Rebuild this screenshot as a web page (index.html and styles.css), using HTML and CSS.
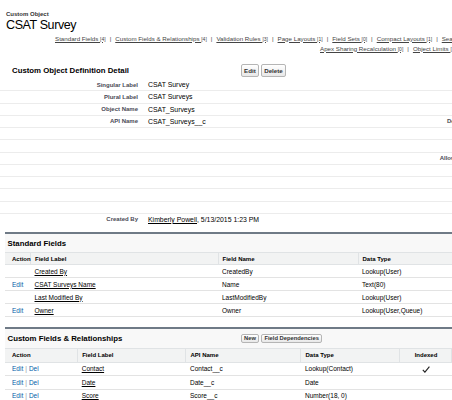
FILE: index.html
```html
<!DOCTYPE html>
<html lang="en">
<head>
    <meta charset="UTF-8">
    <title>CSAT Survey ~ Custom Object</title>
    <link rel="stylesheet" href="styles.css">
</head>
<body>
<div class="page">

    <div class="pt-header">
        <div class="pt-type">Custom Object</div>
        <h1 class="pt-title">CSAT Survey</h1>
    </div>

    <div class="quick-links">
        <div class="ql-row ql-first">
            <a href="#">Standard Fields <span class="count">[4]</span></a><span class="sep">|</span><a href="#">Custom Fields &amp; Relationships <span class="count">[4]</span></a><span class="sep">|</span><a href="#">Validation Rules <span class="count">[3]</span></a><span class="sep">|</span><a href="#">Page Layouts <span class="count">[1]</span></a><span class="sep">|</span><a href="#">Field Sets <span class="count">[0]</span></a><span class="sep">|</span><a href="#">Compact Layouts <span class="count">[1]</span></a><span class="sep">|</span><a href="#">Search Layouts <span class="count">[6]</span></a>
        </div>
        <div class="ql-row ql-second">
            <a href="#">Apex Sharing Recalculation <span class="count">[0]</span></a><span class="sep">|</span><a href="#">Object Limits <span class="count">[12]</span></a>
        </div>
    </div>

    <div class="detail-block">
        <div class="block-head">
            <h2 class="block-title">Custom Object Definition Detail</h2>
            <button class="btn btn-big">Edit</button>
            <button class="btn btn-big">Delete</button>
        </div>
        <table class="detail-list">
            <colgroup>
                <col class="c-label"><col class="c-data"><col class="c-label2"><col>
            </colgroup>
            <tr><td class="label-col">Singular Label</td><td class="data-col">CSAT Survey</td><td class="label-col"></td><td class="data-col"></td></tr>
            <tr><td class="label-col">Plural Label</td><td class="data-col">CSAT Surveys</td><td class="label-col"></td><td class="data-col"></td></tr>
            <tr><td class="label-col">Object Name</td><td class="data-col">CSAT_Surveys</td><td class="label-col"></td><td class="data-col"></td></tr>
            <tr><td class="label-col">API Name</td><td class="data-col">CSAT_Surveys__c</td><td class="label-col">Description</td><td class="data-col"></td></tr>
            <tr><td class="label-col"></td><td class="data-col"></td><td class="label-col"></td><td class="data-col"></td></tr>
            <tr><td class="label-col"></td><td class="data-col"></td><td class="label-col"></td><td class="data-col"></td></tr>
            <tr><td class="label-col"></td><td class="data-col"></td><td class="label-col">Allow Reports</td><td class="data-col"></td></tr>
            <tr><td class="label-col"></td><td class="data-col"></td><td class="label-col"></td><td class="data-col"></td></tr>
            <tr><td class="label-col"></td><td class="data-col"></td><td class="label-col"></td><td class="data-col"></td></tr>
            <tr><td class="label-col"></td><td class="data-col"></td><td class="label-col"></td><td class="data-col"></td></tr>
            <tr><td class="label-col"></td><td class="data-col"></td><td class="label-col"></td><td class="data-col"></td></tr>
            <tr class="last"><td class="label-col">Created By</td><td class="data-col"><a href="#" class="user-link">Kimberly Powell</a>, 5/13/2015 1:23 PM</td><td class="label-col"></td><td class="data-col"></td></tr>
        </table>
    </div>

    <div class="rel-list">
        <div class="rel-head">
            <h3 class="rel-title">Standard Fields</h3>
        </div>
        <table class="list std-list">
            <colgroup>
                <col class="s-action"><col class="s-label"><col class="s-name"><col class="s-type"><col>
            </colgroup>
            <tr><th class="first">Action</th><th>Field Label</th><th>Field Name</th><th>Data Type</th><th></th></tr>
            <tr><td class="first"></td><td><a href="#" class="field-link">Created By</a></td><td>CreatedBy</td><td>Lookup(User)</td><td></td></tr>
            <tr><td class="first"><a href="#" class="action-link">Edit</a></td><td><a href="#" class="field-link">CSAT Surveys Name</a></td><td>Name</td><td>Text(80)</td><td></td></tr>
            <tr><td class="first"></td><td><a href="#" class="field-link">Last Modified By</a></td><td>LastModifiedBy</td><td>Lookup(User)</td><td></td></tr>
            <tr><td class="first"><a href="#" class="action-link">Edit</a></td><td><a href="#" class="field-link">Owner</a></td><td>Owner</td><td>Lookup(User,Queue)</td><td></td></tr>
        </table>
    </div>

    <div class="rel-list custom">
        <div class="rel-head">
            <h3 class="rel-title">Custom Fields &amp; Relationships</h3>
            <button class="btn btn-small">New</button>
            <button class="btn btn-small">Field Dependencies</button>
        </div>
        <table class="list cust-list">
            <colgroup>
                <col class="k-action"><col class="k-label"><col class="k-api"><col class="k-type"><col class="k-index"><col>
            </colgroup>
            <tr><th class="first">Action</th><th>Field Label</th><th>API Name</th><th>Data Type</th><th class="center">Indexed</th><th>Controlling Field</th></tr>
            <tr>
                <td class="first"><a href="#" class="action-link">Edit</a><span class="pipe">|</span><a href="#" class="action-link">Del</a></td>
                <td><a href="#" class="field-link">Contact</a></td><td>Contact__c</td><td>Lookup(Contact)</td>
                <td class="center"><svg class="check" width="8" height="7" viewBox="0 0 8 7"><path d="M0.8 3.9 L2.9 6.2 L7.4 0.6" fill="none" stroke="#222" stroke-width="1.1"/></svg></td><td></td>
            </tr>
            <tr>
                <td class="first"><a href="#" class="action-link">Edit</a><span class="pipe">|</span><a href="#" class="action-link">Del</a></td>
                <td><a href="#" class="field-link">Date</a></td><td>Date__c</td><td>Date</td><td></td><td></td>
            </tr>
            <tr>
                <td class="first"><a href="#" class="action-link">Edit</a><span class="pipe">|</span><a href="#" class="action-link">Del</a></td>
                <td><a href="#" class="field-link">Score</a></td><td>Score__c</td><td>Number(18, 0)</td><td></td><td></td>
            </tr>
        </table>
    </div>

</div>
</body>
</html>
```

FILE: styles.css
```css
html, body {
    margin: 0;
    background: #fff;
    overflow: hidden;
}
body {
    font-family: "Liberation Sans", Arial, sans-serif;
    color: #222;
}
.page {
    width: 600px;
}

/* page title */
.pt-header {
    padding: 11px 0 0 6px;
}
.pt-type {
    font-size: 6px;
    font-weight: bold;
    line-height: 7px;
    color: #333;
}
.pt-title {
    margin: 0;
    font-size: 12.5px;
    font-weight: normal;
    line-height: 15px;
    letter-spacing: -0.4px;
    color: #000;
}

/* links under the title */
.quick-links {
    padding-top: 0.5px;
    font-size: 6.2px;
    line-height: 9px;
    white-space: nowrap;
    color: #444;
}
.ql-first {
    padding-left: 55px;
}
.ql-second {
    padding-left: 320px;
}
.quick-links a {
    color: #444;
    text-decoration: underline;
}
.quick-links .count {
    font-size: 5px;
}
.quick-links .sep {
    margin: 0 4px;
}

/* object detail */
.detail-block {
    margin-top: 7.5px;
}
.block-head {
    display: flex;
    align-items: center;
    height: 18px;
}
.block-title {
    box-sizing: border-box;
    width: 241px;
    margin: 0;
    padding-left: 12px;
    font-size: 7.8px;
    font-weight: bold;
    color: #000;
}
.btn {
    box-sizing: border-box;
    margin: 0 2.5px 0 0;
    padding: 0 2px;
    font-family: "Liberation Sans", Arial, sans-serif;
    font-weight: bold;
    color: #333;
    background: linear-gradient(#fff, #e8e8e8);
    border: 1px solid #b5b5b5;
    border-radius: 2px;
}
.btn-big {
    height: 13px;
    font-size: 6.2px;
}
.btn-small {
    height: 9px;
    font-size: 5.8px;
    line-height: 7px;
}

.detail-list {
    width: 600px;
    table-layout: fixed;
    border-collapse: collapse;
}
.c-label { width: 142px; }
.c-data { width: 250px; }
.c-label2 { width: 92px; }
.detail-list td {
    height: 11.25px;
    padding: 0;
    border-bottom: 1px solid #ececec;
    white-space: nowrap;
    overflow: hidden;
}
.detail-list tr.last td {
    border-bottom: none;
}
.label-col {
    padding-right: 4px !important;
    text-align: right;
    font-size: 6px;
    font-weight: bold;
    color: #4a4a56;
}
.data-col {
    padding-left: 6px !important;
    font-size: 6.9px;
    color: #000;
}
.user-link {
    color: #000;
    text-decoration: underline;
}

/* related lists */
.rel-list {
    width: 600px;
    margin: 7px 0 0 5px;
    background: #f8f8f8;
    border-top: 2px solid #6f7a86;
}
.rel-list.custom {
    margin-top: 10px;
}
.rel-head {
    display: flex;
    align-items: center;
    height: 18px;
}
.rel-title {
    box-sizing: border-box;
    width: 236px;
    margin: 0;
    padding-left: 2.5px;
    font-size: 7.8px;
    font-weight: bold;
    color: #000;
}
.custom .rel-head {
    height: 19px;
}

.list {
    width: 100%;
    table-layout: fixed;
    border-collapse: collapse;
    background: #fff;
}
.list th {
    height: 11px;
    padding: 0 4px;
    text-align: left;
    font-size: 6px;
    font-weight: bold;
    color: #000;
    background: #f2f3f3;
    border-top: 1px solid #e0e3e5;
    border-bottom: 1px solid #e0e3e5;
    border-left: 1px solid #e0e3e5;
    white-space: nowrap;
}
.list th.first {
    border-left: none;
}
.list td {
    height: 12px;
    padding: 0 4px;
    font-size: 6.5px;
    color: #000;
    border-bottom: 1px solid #e3e3e3;
    white-space: nowrap;
}
.list .first {
    padding-left: 7px;
}
.list .center {
    text-align: center;
}
.field-link {
    color: #000;
    text-decoration: underline;
}
.action-link {
    color: #015ba7;
    text-decoration: none;
}
.pipe {
    margin: 0 2px;
    color: #999;
}
.check {
    display: inline-block;
    vertical-align: middle;
}

.s-action { width: 25.5px; }
.s-label { width: 187.5px; }
.s-name { width: 140px; }
.s-type { width: 120px; }

.cust-list th {
    height: 12.5px;
}
.cust-list td {
    height: 12.5px;
}
.k-action { width: 72.7px; }
.k-label { width: 108.3px; }
.k-api { width: 115px; }
.k-type { width: 99px; }
.k-index { width: 52px; }
```
